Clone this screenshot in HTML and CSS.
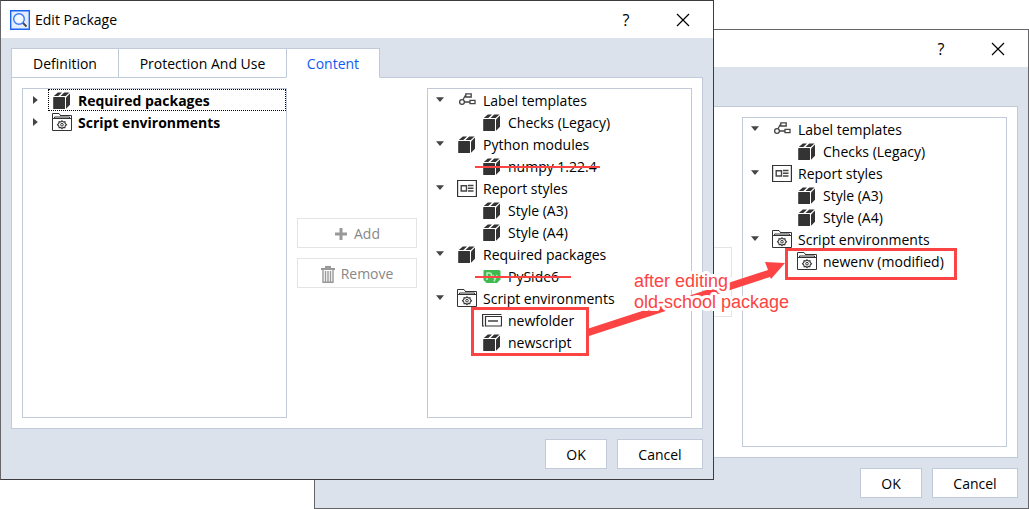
FILE: index.html
```html
<!DOCTYPE html>
<html lang="en">
<head>
<meta charset="utf-8">
<title>Edit Package</title>
<link rel="stylesheet" href="styles.css">
</head>
<body>
<svg class="defs" aria-hidden="true">
  <symbol id="package" viewBox="0 0 20 20">
    <path fill="#333" d="M1.800 7h10.600q.6 0 .6.6v10.800q0 .6-.6.6H1.800q-.6 0-.6-.6V7.600q0-.6.6-.6z"/>
    <path fill="#333" d="M14 7.600 18 3.400v11.400l-4 4z"/>
    <path fill="#333" d="M1.800 6 5.800 2.400H10L6.300 6zM8.500 6l3.700-3.600h5.300L13.700 6z"/>
  </symbol>
  <symbol id="env" viewBox="0 0 20 20">
    <path fill="#fff" stroke="#333" d="M.5 18.500V1.500h6.500l1.500 2h11v15z"/>
    <path fill="none" stroke="#333" d="M2.500 6.500V5h15v1.500M.5 6.500h19M8 3.500h10"/>
    <path fill="none" stroke="#333" stroke-width="1.100" d="M10 8.800l1.200 1.200 1.700-.3.300 1.700 1.300 1.300-1.300 1.300-.3 1.700-1.700-.3L10 16.600l-1.200-1.200-1.700.3-.3-1.700-1.300-1.300 1.300-1.300.3-1.700 1.700.3z"/>
    <circle cx="10" cy="12.700" r="1.300" fill="none" stroke="#333"/>
  </symbol>
  <symbol id="label" viewBox="0 0 20 20">
    <g fill="none" stroke="#444" stroke-width="1.300">
      <circle cx="5" cy="12" r="2.400"/>
      <path d="M7.400 12H13M6 9.800 8.300 5.500M8.800 3.800h5.400v3.200H8.800zM13 10.400h5v3.200h-5z"/>
    </g>
  </symbol>
  <symbol id="report" viewBox="0 0 20 20">
    <path fill="#fff" stroke="#333" stroke-width="1.200" d="M.6 2.500h18.800v16H.6z"/>
    <path fill="none" stroke="#444" stroke-width="1.400" d="M4.200 7.700h5.300v5.300H4.200zM11 7.500h5.500M11 10.300h5.500M11 13h5.500"/>
  </symbol>
  <symbol id="folder" viewBox="0 0 20 20">
    <path fill="none" stroke="#333" stroke-width="1.200" d="M19.500 4.500H.6v11.500h1.500M3.500 6.500h16v9.500h-16z"/>
    <path fill="none" stroke="#333" stroke-width="1.400" d="M6 11h10"/>
  </symbol>
  <symbol id="python" viewBox="0 0 20 20">
    <path fill="#3fb950" d="M1.500 5q0-1 1-1H17q1.500 0 1.500 1.500v8L15 17H4.500L1.500 14z"/>
    <path fill="none" stroke="#b9f0c0" stroke-width="1.500" d="M5 14V7h2.500q2 0 2 2t-2 2H5M11 9l2 4 2-4M13 13l-1 2.500"/>
  </symbol>
  <symbol id="close" viewBox="0 0 14 14">
    <path stroke="#000" stroke-width="1.200" d="M1 1 13 13M13 1 1 13"/>
  </symbol>
</svg>

<main class="desktop">
  <section class="window window-back">
    <header class="titlebar">
      <button class="caption">?</button>
      <button class="caption" aria-label="Close"><svg class="close"><use href="#close"/></svg></button>
    </header>
    <div class="body">
      <div class="panel">
        <div class="tree"></div>
        <div class="transfer">
          <button class="push" disabled></button>
          <button class="push" disabled></button>
        </div>
        <ul class="tree">
          <li><div class="row"><button class="toggle open" aria-label="Collapse"></button><svg class="icon"><use href="#label"/></svg>Label templates</div>
            <ul><li class="row"><svg class="icon"><use href="#package"/></svg>Checks (Legacy)</li></ul></li>
          <li><div class="row"><button class="toggle open" aria-label="Collapse"></button><svg class="icon"><use href="#report"/></svg>Report styles</div>
            <ul><li class="row"><svg class="icon"><use href="#package"/></svg>Style (A3)</li>
              <li class="row"><svg class="icon"><use href="#package"/></svg>Style (A4)</li></ul></li>
          <li><div class="row"><button class="toggle open" aria-label="Collapse"></button><svg class="icon"><use href="#env"/></svg>Script environments</div>
            <ul class="marked marked-after"><li class="row"><svg class="icon"><use href="#env"/></svg>newenv (modified)</li></ul></li>
        </ul>
      </div>
      <footer class="actions"><button class="push ok">OK</button><button class="push cancel">Cancel</button></footer>
    </div>
  </section>

  <section class="window window-front">
    <header class="titlebar">
      <svg class="logo" viewBox="0 0 20 20">
        <path fill="#e3edff" stroke="#1a62f5" stroke-width="1.400" d="M.7.7h18.600v18.600H.7z"/>
        <circle cx="9" cy="9" r="5.300" fill="#f3f7ff" stroke="#3a78f5" stroke-width="1.400"/>
        <path stroke="#444" stroke-width="1.800" d="M13 13l3.500 3.500"/>
      </svg>
      <h1 class="title">Edit Package</h1>
      <button class="caption">?</button>
      <button class="caption" aria-label="Close"><svg class="close"><use href="#close"/></svg></button>
    </header>
    <div class="body">
      <nav class="tabs">
        <button class="tab tab-definition">Definition</button><button class="tab tab-protection">Protection And Use</button><button class="tab tab-content active">Content</button>
      </nav>
      <div class="panel">
        <ul class="tree strong">
          <li class="row focused"><button class="toggle" aria-label="Expand"></button><svg class="icon"><use href="#package"/></svg>Required packages</li>
          <li class="row"><button class="toggle" aria-label="Expand"></button><svg class="icon"><use href="#env"/></svg>Script environments</li>
        </ul>
        <div class="transfer">
          <button class="push" disabled><svg class="plus" viewBox="0 0 14 14"><path stroke="#999" stroke-width="3" d="M7 1v12M1 7h12"/></svg>Add</button>
          <button class="push" disabled><svg class="trash" viewBox="0 0 14 18"><g fill="none" stroke="#999"><path stroke-width="2" d="M0 4h14M4 2h6"/><path stroke-width="1.400" d="M2 5v12.200h10V5M4.500 6v11M7 6v11M9.500 6v11"/></g></svg>Remove</button>
        </div>
        <ul class="tree">
          <li><div class="row"><button class="toggle open" aria-label="Collapse"></button><svg class="icon"><use href="#label"/></svg>Label templates</div>
            <ul><li class="row"><svg class="icon"><use href="#package"/></svg>Checks (Legacy)</li></ul></li>
          <li><div class="row"><button class="toggle open" aria-label="Collapse"></button><svg class="icon"><use href="#package"/></svg>Python modules</div>
            <ul><li class="row removed"><svg class="icon"><use href="#package"/></svg>numpy 1.22.4</li></ul></li>
          <li><div class="row"><button class="toggle open" aria-label="Collapse"></button><svg class="icon"><use href="#report"/></svg>Report styles</div>
            <ul><li class="row"><svg class="icon"><use href="#package"/></svg>Style (A3)</li>
              <li class="row"><svg class="icon"><use href="#package"/></svg>Style (A4)</li></ul></li>
          <li><div class="row"><button class="toggle open" aria-label="Collapse"></button><svg class="icon"><use href="#package"/></svg>Required packages</div>
            <ul><li class="row removed removed-wide"><svg class="icon"><use href="#python"/></svg>PySide6</li></ul></li>
          <li><div class="row"><button class="toggle open" aria-label="Collapse"></button><svg class="icon"><use href="#env"/></svg>Script environments</div>
            <ul class="marked marked-before"><li class="row"><svg class="icon"><use href="#folder"/></svg>newfolder</li>
              <li class="row"><svg class="icon"><use href="#package"/></svg>newscript</li></ul></li>
        </ul>
      </div>
      <footer class="actions"><button class="push ok">OK</button><button class="push cancel">Cancel</button></footer>
    </div>
  </section>

  <svg class="note" viewBox="0 0 210 110">
    <path fill="#fc4444" d="M0 78 181 19 178 11 198 12 184 28 183 26 2 85z"/>
    <text class="note-text" x="47" y="36">after editing</text>
    <text class="note-text" x="47" y="57">old-school package</text>
  </svg>
</main>
</body>
</html>
```

FILE: styles.css
```css
* { box-sizing: border-box; }

body {
  margin: 0;
  background: #fff;
  color: #000;
  font: 14px/22px "Open Sans", "Noto Sans", sans-serif;
}

button {
  margin: 0;
  padding: 0;
  border: 0;
  background: none;
  color: inherit;
  font: inherit;
}

ul {
  margin: 0;
  padding: 0;
  list-style: none;
}

.defs {
  position: absolute;
  width: 0;
  height: 0;
}

.desktop {
  position: relative;
  height: 100vh;
  min-height: 480px;
  min-width: 960px;
  overflow: hidden;
}

.window {
  position: absolute;
  display: flex;
  flex-direction: column;
  border: 1px solid #66666a;
  background: #dce2ec;
}

.window-front {
  inset: 0 315px 29px 0;
  border-color: #3c3c40;
  border-left-color: #66666a;
}

.window-back { inset: 29px 0 0 314px; }

.titlebar {
  display: flex;
  flex: none;
  align-items: center;
  justify-content: flex-end;
  height: 37px;
  padding-left: 9px;
  background: #fff;
}

.logo {
  width: 20px;
  height: 20px;
}

.title {
  flex: 1;
  margin: 0 0 0 5px;
  font-size: 14px;
  font-weight: 400;
}

.caption {
  display: flex;
  align-items: center;
  justify-content: center;
  width: 54px;
  height: 36px;
  font-size: 16px;
}

.caption:last-child {
  width: 60px;
}

.close {
  width: 14px;
  height: 14px;
}

.body {
  display: flex;
  flex: 1;
  flex-direction: column;
  padding: 10px;
}

.window-back .body { padding: 39px 10px 10px 11px; }

.tabs {
  display: flex;
  position: relative;
  z-index: 1;
  margin-bottom: -1px;
}

.tab {
  height: 30px;
  margin-right: -1px;
  padding-top: 2px;
  border: 1px solid #c1cad9;
  background: #fff;
}

.tab-definition { width: 108px; }
.tab-protection { width: 169px; }
.tab-content { width: 94px; }

.tab.active {
  border-bottom-color: #fff;
  color: #0d5bf5;
}

.panel {
  display: flex;
  flex: 1;
  padding: 10px;
  border: 1px solid #c1cad9;
  background: #fff;
}

.tree {
  flex: 1;
  min-width: 0;
  border: 1px solid #c1cad9;
}

.tree.strong { font-weight: 700; }

.row {
  display: flex;
  position: relative;
  align-items: center;
  height: 22px;
  padding-top: 2px;
  white-space: nowrap;
}

.tree ul .row { padding-left: 54px; }

.focused::after {
  content: "";
  position: absolute;
  inset: 0 0 0 25px;
  border: 1px dotted #000;
}

.toggle {
  width: 8px;
  height: 8px;
  margin: 0 13px 2px 8px;
  background: #444;
  clip-path: polygon(25% 0, 85% 50%, 25% 100%);
}

.toggle.open { clip-path: polygon(0 15%, 100% 15%, 50% 75%); }

.icon {
  flex: none;
  width: 20px;
  height: 20px;
  margin: 0 6px 2px 0;
}

.removed {
  width: max-content;
}

.removed::after {
  content: "";
  position: absolute;
  inset: 11px -3px auto 47px;
  height: 2px;
  background: #fc4444;
}

.removed-wide::after { right: -12px; }

.marked {
  position: relative;
  width: max-content;
}

.marked::after {
  content: "";
  position: absolute;
  border: 3px solid #fc4444;
}

.marked-before::after { inset: -2px -15px -3px 43px; }
.marked-after::after { inset: -2px -13px -8px 42px; }

.transfer {
  display: flex;
  flex: none;
  flex-direction: column;
  justify-content: center;
  gap: 10px;
  width: 140px;
  padding: 0 10px;
}

.push {
  display: flex;
  align-items: center;
  justify-content: center;
  height: 30px;
  padding-top: 1px;
  border: 1px solid #c1cad9;
  background: #fff;
}

.push:disabled {
  border-color: #e4e4e4;
  color: #888;
}

.plus {
  width: 14px;
  height: 14px;
  margin-right: 6px;
}

.trash {
  width: 14px;
  height: 18px;
  margin-right: 6px;
}

.actions {
  display: flex;
  justify-content: flex-end;
  gap: 10px;
  padding-top: 10px;
}

.ok { width: 62px; }
.cancel { width: 86px; }

.note {
  position: absolute;
  top: 251px;
  right: 232px;
  width: 210px;
  height: 110px;
  pointer-events: none;
}

.note-text {
  fill: #fc4444;
  stroke: #fff;
  stroke-width: 6px;
  stroke-linejoin: round;
  paint-order: stroke;
  font: 18px "Liberation Sans", Arial, sans-serif;
}
```
